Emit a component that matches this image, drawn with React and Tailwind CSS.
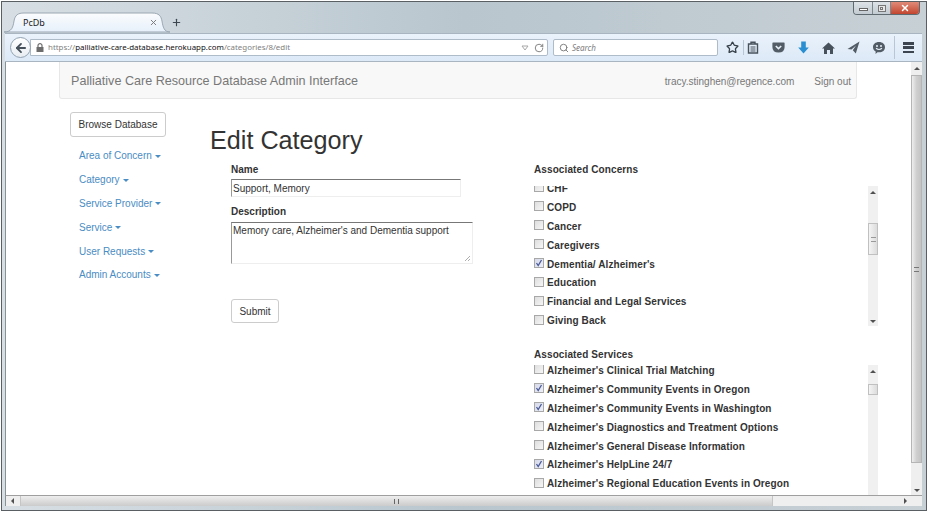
import { ArrowLeft, RotateCw, Search, Star, X, Plus } from "lucide-react";

const concerns = [
    ["COPD", false],
    ["Cancer", false],
    ["Caregivers", false],
    ["Dementia/ Alzheimer's", true],
    ["Education", false],
    ["Financial and Legal Services", false],
    ["Giving Back", false],
];

const services = [
    ["Alzheimer's Clinical Trial Matching", false],
    ["Alzheimer's Community Events in Oregon", true],
    ["Alzheimer's Community Events in Washington", true],
    ["Alzheimer's Diagnostics and Treatment Options", false],
    ["Alzheimer's General Disease Information", false],
    ["Alzheimer's HelpLine 24/7", true],
    ["Alzheimer's Regional Education Events in Oregon", false],
];

const menu = ["Area of Concern", "Category", "Service Provider", "Service", "User Requests", "Admin Accounts"];

function Arrow({ dir }) {
    const paths = {
        up: "M0 4 L3 1 L6 4 Z",
        down: "M0 2 L6 2 L3 5 Z",
        left: "M4 0 L4 6 L1 3 Z",
        right: "M2 0 L2 6 L5 3 Z",
    };
    return (
        <svg width="6" height="6" viewBox="0 0 6 6" className="shrink-0">
            <path d={paths[dir]} fill="#505050" />
        </svg>
    );
}

function CheckItem({ label, checked }) {
    return (
        <div className="flex h-[18.9px] shrink-0 items-center gap-[3px]">
            <span className={`-mt-[2px] flex h-[10px] w-[10px] shrink-0 items-center justify-center border border-[#a8a8a8] bg-linear-to-br ${checked ? "from-[#d5d9ea] to-[#eef0f6]" : "from-[#dedede] to-[#f6f6f6]"}`}>
                {checked && (
                    <svg width="8" height="8" viewBox="0 0 8 8">
                        <path d="M1.5 4 L3.2 6.5 L6.5 1" fill="none" stroke="#4a5a9a" strokeWidth="1.3" />
                    </svg>
                )}
            </span>
            <span className="whitespace-nowrap text-[10px] font-bold tracking-[0.1px] text-[#333]">{label}</span>
        </div>
    );
}

function MiniScrollbar({ thumbTop, thumbHeight, grip }) {
    return (
        <div className="flex h-full w-[10px] shrink-0 flex-col items-center bg-[#f0f0f0]">
            <div className="flex h-[10px] shrink-0 items-end justify-center">
                <Arrow dir="up" />
            </div>
            <div className="w-full flex-1">
                <div
                    className="flex w-full items-center justify-center border border-[#c0c0c0] bg-linear-to-r from-[#f4f4f4] to-[#dcdcdc]"
                    style={{ marginTop: thumbTop, height: thumbHeight }}
                >
                    {grip && <div className="h-[5px] w-[5px] border-y border-[#999]" />}
                </div>
            </div>
            <div className="flex h-[10px] shrink-0 items-center justify-center">
                <Arrow dir="down" />
            </div>
        </div>
    );
}

function BrowserTab() {
    return (
        <div className="relative ml-[2px] h-[21px] w-[166px] shrink-0">
            <svg className="absolute inset-0" width="166" height="21" viewBox="0 0 166 21">
                <defs>
                    <linearGradient id="tabfill" x1="0" y1="0" x2="0" y2="1">
                        <stop offset="0" stopColor="#fbfcfd" />
                        <stop offset="1" stopColor="#e6f0fb" />
                    </linearGradient>
                </defs>
                <path
                    d="M0 20 C8 20 9 15 10 9 C11 3 14 1 20 1 L148 1 C155 1 157 4 158 9 C159 15 160 20 166 20 Z"
                    fill="url(#tabfill)"
                    stroke="#9aa7b2"
                    strokeWidth="1"
                />
            </svg>
            <div className="relative flex h-full items-center justify-between pl-[19px] pr-[12px]">
                <span className="font-['Noto_Sans'] text-[9px] text-[#222]">PcDb</span>
                <X size={9} strokeWidth={2.5} className="text-[#777]" />
            </div>
        </div>
    );
}

function WindowControls() {
    return (
        <div className="flex h-[13px] w-[67px] overflow-hidden rounded-b-[4px] border border-t-0 border-[#5f6a70]">
            <div className="flex w-[19px] items-end justify-center border-r border-[#7d878d] bg-linear-to-b from-[#dde3e7] to-[#c3ccd2] pb-[3px]">
                <div className="h-[3px] w-[9px] border border-[#666] bg-white" />
            </div>
            <div className="flex w-[18px] items-center justify-center border-r border-[#7d878d] bg-linear-to-b from-[#dde3e7] to-[#c3ccd2]">
                <div className="flex h-[7px] w-[8px] items-center justify-center border border-[#777] bg-[#e6e6e6]">
                    <div className="h-[3px] w-[3px] border border-[#777]" />
                </div>
            </div>
            <div className="flex flex-1 items-center justify-center bg-linear-to-b from-[#e08a78] to-[#c2452e]">
                <X size={10} strokeWidth={3.5} className="text-white" />
            </div>
        </div>
    );
}

function Toolbar() {
    return (
        <div className="flex h-[29px] shrink-0 items-center border-y border-[#a9b6c2] bg-linear-to-b from-[#eaf2fb] to-[#dce9f7] pl-[5px]">
            {/* back button */}
            <div className="z-10 flex h-[21px] w-[21px] shrink-0 items-center justify-center rounded-full border border-[#93a3b3] bg-linear-to-b from-white to-[#e8edf2]">
                <ArrowLeft size={14} strokeWidth={3.2} className="text-[#47515c]" />
            </div>
            {/* url bar */}
            <div className="-ml-[1px] flex h-[17px] w-[518px] shrink-0 items-center rounded-r-[2px] border border-[#aebbc8] bg-white pl-[5px] pr-[3px]">
                <svg width="8" height="9" viewBox="0 0 8 9" className="mr-[4px] shrink-0">
                    <path d="M2 4 V2.6 C2 0 6 0 6 2.6 V4" fill="none" stroke="#6d6d6d" strokeWidth="1.2" />
                    <path d="M0.5 4 H7.5 V9 H0.5 Z" fill="#6d6d6d" />
                </svg>
                <span className="whitespace-nowrap font-['Noto_Sans'] text-[7.9px] text-[#808080]">
                    https://<span className="text-[#111]">palliative-care-database.herokuapp.com</span>/categories/8/edit
                </span>
                <svg width="8" height="6" viewBox="0 0 8 6" className="ml-auto mr-[5px]">
                    <path d="M1 1 L7 1 L4 5 Z" fill="none" stroke="#a8a8a8" />
                </svg>
                <RotateCw size={10} strokeWidth={2} className="text-[#6d6d6d]" />
            </div>
            {/* search */}
            <div className="ml-[5px] flex h-[17px] w-[165px] shrink-0 items-center gap-[3px] rounded-[2px] border border-[#aebbc8] bg-white pl-[5px]">
                <Search size={10} strokeWidth={2.2} className="text-[#777]" />
                <span className="font-['Noto_Sans'] text-[8px] italic text-[#7b7b7b]">Search</span>
            </div>
            {/* toolbar icons */}
            <div className="flex flex-1 items-center pl-[8px]">
                <Star size={13} strokeWidth={2.4} className="shrink-0 text-[#37414b]" />
                <div className="ml-[4px] h-[15px] w-px bg-[#b9c6d3]" />
                <svg width="12" height="13" viewBox="0 0 12 13" className="ml-[3px] shrink-0">
                    <path d="M1.5 3 H10.5 V12 H1.5 Z M4 3 V1.2 H8 V3" fill="none" stroke="#47515c" strokeWidth="1.4" />
                    <path d="M3.5 6 H8.5 M3.5 8 H8.5 M3.5 10 H8.5" stroke="#47515c" strokeWidth="1" />
                </svg>
                <svg width="13" height="11" viewBox="0 0 13 11" className="ml-[13px] shrink-0">
                    <path d="M1 0.5 H12 Q12.6 0.5 12.6 1.5 V5 Q12.6 10.5 6.5 10.5 Q0.4 10.5 0.4 5 V1.5 Q0.4 0.5 1 0.5 Z" fill="#525c66" />
                    <path d="M3.8 4 L6.5 6.6 L9.2 4" fill="none" stroke="#e6eef8" strokeWidth="1.6" />
                </svg>
                <svg width="11" height="13" viewBox="0 0 11 13" className="ml-[13px] shrink-0">
                    <path d="M3.2 0.5 H7.8 V6.5 H10.8 L5.5 12.5 L0.2 6.5 H3.2 Z" fill="#2a8fd0" />
                </svg>
                <svg width="13" height="12" viewBox="0 0 13 12" className="ml-[13px] shrink-0">
                    <path d="M6.5 0.5 L13 6.5 H11 V12 H8 V8 H5 V12 H2 V6.5 H0 Z" fill="#47515c" />
                </svg>
                <svg width="13" height="13" viewBox="0 0 13 13" className="ml-[12px] shrink-0">
                    <path d="M12.5 0.5 L0.5 8 L4.5 8.6 L9 4.5 L5.8 9.2 L8.8 12.5 Z" fill="#525c66" />
                </svg>
                <svg width="14" height="14" viewBox="0 0 14 14" className="ml-[12px] shrink-0">
                    <path d="M7 1 C10.6 1 13 3.2 13 6.2 C13 9.2 10.6 11.2 7 11.2 L5.5 11.2 L3.5 13 L3.7 10.6 C2 9.6 1 8 1 6.2 C1 3.2 3.4 1 7 1 Z" fill="#525c66" />
                    <circle cx="5" cy="5" r="1" fill="#e6eef8" />
                    <circle cx="9" cy="5" r="1" fill="#e6eef8" />
                    <path d="M4 7.3 Q7 9.6 10 7.3" fill="none" stroke="#e6eef8" strokeWidth="1.1" />
                </svg>
                <div className="ml-[8px] h-[23px] w-px bg-[#b9c6d3]" />
                {/* hamburger */}
                <div className="ml-[8px] flex h-[11px] w-[11px] shrink-0 flex-col justify-between">
                    <div className="h-[2.5px] bg-[#3d4650]" />
                    <div className="h-[2.5px] bg-[#3d4650]" />
                    <div className="h-[2.5px] bg-[#3d4650]" />
                </div>
            </div>
        </div>
    );
}

function PageScrollbar() {
    return (
        <div className="flex w-[11px] shrink-0 flex-col items-center bg-[#efefef]">
            <div className="flex h-[13px] shrink-0 items-center justify-center">
                <Arrow dir="up" />
            </div>
            <div className="w-full flex-1">
                <div className="flex h-[388px] w-full items-center justify-center border border-[#b5b5b5] bg-linear-to-r from-[#eeeeee] via-[#cfcfcf] to-[#c4c4c4]">
                    <div className="h-[5px] w-[5px] border-y border-[#777]" />
                </div>
            </div>
            <div className="flex h-[11px] shrink-0 items-center justify-center">
                <Arrow dir="down" />
            </div>
        </div>
    );
}

function HScrollbar() {
    return (
        <div className="flex h-[11px] shrink-0 items-center border-t border-l border-t-[#9f9f9f] border-l-[#8a9299] bg-[#efefef] pr-[11px]">
            <div className="flex h-full w-[14px] shrink-0 items-center justify-center">
                <Arrow dir="left" />
            </div>
            <div className="flex h-full w-[753px] shrink-0 items-center justify-center border-x border-[#c5c5c5] bg-linear-to-b from-[#eeeeee] to-[#cbcbcb]">
                <div className="h-[5px] w-[5px] border-x border-[#666]" />
            </div>
            <div className="flex-1" />
            <div className="flex h-full w-[13px] shrink-0 items-center justify-center">
                <Arrow dir="right" />
            </div>
        </div>
    );
}

function Sidebar() {
    return (
        <div className="w-[140px] shrink-0 pt-[12px]">
            <button className="h-[25px] w-[96px] rounded-[3px] border border-[#cccccc] bg-white text-[10px] text-[#333]">
                Browse Database
            </button>
            <ul className="mt-[7px] pl-[9px]">
                {menu.map((item) => (
                    <li key={item} className="flex h-[23.8px] items-center gap-[3px] text-[10px] text-[#4a8cc4]">
                        {item}
                        <span className="mt-[1px] h-0 w-0 border-x-[3px] border-t-[3px] border-x-transparent border-t-[#4a8cc4]" />
                    </li>
                ))}
            </ul>
        </div>
    );
}

function EditForm() {
    return (
        <div className="ml-[21px] w-[303px] shrink-0 pt-[8px]">
            <label className="block text-[10px] font-bold leading-[14px] text-[#333]">Name</label>
            <div className="mt-[2px] flex h-[18px] w-[230px] items-center border border-t-[#777] border-r-[#eeeeee] border-b-[#eeeeee] border-l-[#999] pl-[1px] pt-[1px] text-[10px] text-[#333]">
                Support, Memory
            </div>
            <label className="mt-[8px] block text-[10px] font-bold leading-[14px] text-[#333]">Description</label>
            <div className="relative mt-[3px] h-[42px] w-[242px] border border-t-[#777] border-r-[#eeeeee] border-b-[#eeeeee] border-l-[#999] pl-[1px] pt-[1px] text-[10px] leading-[13px] text-[#333]">
                Memory care, Alzheimer's and Dementia support
                <svg width="5" height="5" viewBox="0 0 5 5" className="absolute bottom-[2px] right-[2px]">
                    <path d="M0 5 L5 0 M3 5 L5 3" stroke="#999" strokeWidth="0.8" />
                </svg>
            </div>
            <button className="mt-[35px] h-[24px] w-[48px] rounded-[3px] border border-[#cccccc] bg-white text-[10px] text-[#333]">
                Submit
            </button>
        </div>
    );
}

function Associations() {
    return (
        <div className="flex w-[344px] shrink-0 flex-col pt-[8px]">
            <div className="text-[10px] font-bold leading-[14px] tracking-[0.1px] text-[#333]">Associated Concerns</div>
            {/* concerns list, scrolled a little */}
            <div className="mt-[9px] flex h-[140px] shrink-0 overflow-hidden">
                <div className="flex-1 overflow-hidden">
                    <div className="-mt-[7px]">
                        <CheckItem label="CHF" checked={false} />
                        {concerns.map(([label, checked]) => (
                            <CheckItem key={label} label={label} checked={checked} />
                        ))}
                    </div>
                </div>
                <MiniScrollbar thumbTop={27} thumbHeight={32} grip />
            </div>
            <div className="mt-[22px] text-[10px] font-bold leading-[14px] tracking-[0.1px] text-[#333]">Associated Services</div>
            {/* services list runs past the fold */}
            <div className="mt-[3px] flex h-[150px] shrink-0 overflow-hidden">
                <div className="flex-1 overflow-hidden">
                    <div className="-mt-[4px]">
                        {services.map(([label, checked]) => (
                            <CheckItem key={label} label={label} checked={checked} />
                        ))}
                    </div>
                </div>
                <MiniScrollbar thumbTop={9} thumbHeight={11} />
            </div>
        </div>
    );
}

export default function App() {
    return (
        <div className="h-[512px] w-[929px] overflow-hidden bg-white py-[1px] pl-[1px] pr-[2px] font-['Liberation_Sans',Arial,sans-serif]">
            <div className="flex h-full flex-col border border-[#5a5f63] bg-linear-to-r from-[#d7dfe4] via-[#b9c6ce] to-[#c7d0d5] pl-[3px] pr-[4px] pb-[4px]">
                {/* TITLE BAR */}
                <div className="-ml-[3px] -mr-[4px] flex h-[31px] shrink-0 items-end justify-between">
                    <div className="flex items-center">
                        <BrowserTab />
                        <Plus size={11} strokeWidth={2.5} className="ml-[1px] mb-[1px] text-[#3d4650]" />
                    </div>
                    <div className="mb-[18px] mr-[6px]">
                        <WindowControls />
                    </div>
                </div>

                <Toolbar />

                {/* PAGE */}
                <div className="flex min-h-0 flex-1 border-l border-[#8a9299] bg-white">
                    <div className="min-w-0 flex-1 overflow-hidden">
                        <div className="ml-[53px] flex h-[37px] w-[798px] items-center justify-between rounded-b-[3px] border border-t-0 border-[#e7e7e7] bg-[#f8f8f8] pl-[11px] pr-[5px] pt-[2px] text-[#777]">
                            <span className="text-[12.6px]">Palliative Care Resource Database Admin Interface</span>
                            <div className="flex items-center gap-[20px] text-[10px]">
                                <span>tracy.stinghen@regence.com</span>
                                <span>Sign out</span>
                            </div>
                        </div>
                        <div className="flex pl-[64px]">
                            <Sidebar />
                            <div className="flex-1 pt-[26px]">
                                <h1 className="h-[30px] text-[25.2px] leading-[30px] text-[#333]">Edit Category</h1>
                                <div className="flex">
                                    <EditForm />
                                    <Associations />
                                </div>
                            </div>
                        </div>
                    </div>
                    <PageScrollbar />
                </div>

                <HScrollbar />
            </div>
        </div>
    );
}
